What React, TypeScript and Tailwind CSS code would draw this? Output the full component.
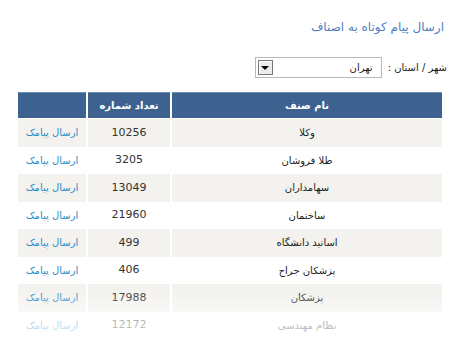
import React from "react";

interface Guild {
  name: string;
  count: number;
}

const guilds: Guild[] = [
  { name: "وکلا", count: 10256 },
  { name: "طلا فروشان", count: 3205 },
  { name: "سهامداران", count: 13049 },
  { name: "ساختمان", count: 21960 },
  { name: "اساتید دانشگاه", count: 499 },
  { name: "پزشکان جراح", count: 406 },
  { name: "پزشکان", count: 17988 },
  { name: "نظام مهندسی", count: 12172 },
];

const App = () => {
  return (
    <div
      dir="rtl"
      className="relative w-[459px] h-[340px] overflow-hidden bg-white text-[11px] text-[#222]"
      style={{ fontFamily: '"DejaVu Sans", Tahoma, sans-serif' }}
    >
      <h1 className="pt-[19px] pr-[15px] text-[12px] font-normal text-[#4f7fc0] leading-[16px]">
        ارسال پیام کوتاه به اصناف
      </h1>

      <div className="mt-[22px] pr-[12px] flex items-center gap-[6px]">
        <span className="text-[10px] text-[#222]">شهر / استان :</span>
        <div className="w-[127px] h-[21px] border border-[#b8b8b8] flex items-center justify-between bg-white pl-[2px] pr-[8px]">
          <span className="text-[10px]">تهران</span>
          <div className="w-[15px] h-[15px] border border-[#777] bg-[#ececec] flex items-center justify-center shadow-[inset_1px_1px_0_#fff]">
            <div className="w-0 h-0 border-l-[4px] border-r-[4px] border-t-[4px] border-l-transparent border-r-transparent border-t-black" />
          </div>
        </div>
      </div>

      <div className="mt-[14px] mr-[15px] w-[428px]">
        <table className="w-full border-separate border-spacing-x-[2px] border-spacing-y-0 text-center">
          <thead>
            <tr className="h-[26px]">
              <th className="bg-[#3e6290] border-t border-t-[#6f8db3] text-white text-[10px] font-bold">
                نام صنف
              </th>
              <th className="w-[82px] bg-[#3e6290] border-t border-t-[#6f8db3] text-white text-[10px] font-bold">
                تعداد شماره
              </th>
              <th className="w-[68px] bg-[#3e6290] border-t border-t-[#6f8db3]" />
            </tr>
            <tr className="h-[1px]">
              <td colSpan={3} />
            </tr>
          </thead>
          <tbody>
            {guilds.map((g, i) => (
              <tr key={i} className="h-[27.5px]">
                <td className={i % 2 === 0 ? "bg-[#f3f2ef] text-[10px]" : "text-[10px]"}>{g.name}</td>
                <td className={i % 2 === 0 ? "bg-[#f3f2ef] text-[11px] text-[#333]" : "text-[11px] text-[#333]"}>
                  {g.count}
                </td>
                <td className={i % 2 === 0 ? "bg-[#f3f2ef] text-[10px] text-[#1e8fc9]" : "text-[10px] text-[#1e8fc9]"}>
                  ارسال پیامک
                </td>
              </tr>
            ))}
          </tbody>
        </table>
      </div>

      <div className="absolute left-0 right-0 bottom-0 h-[50px] bg-gradient-to-b from-white/0 via-white/55 to-white/85 pointer-events-none" />
    </div>
  );
};

export default App;
